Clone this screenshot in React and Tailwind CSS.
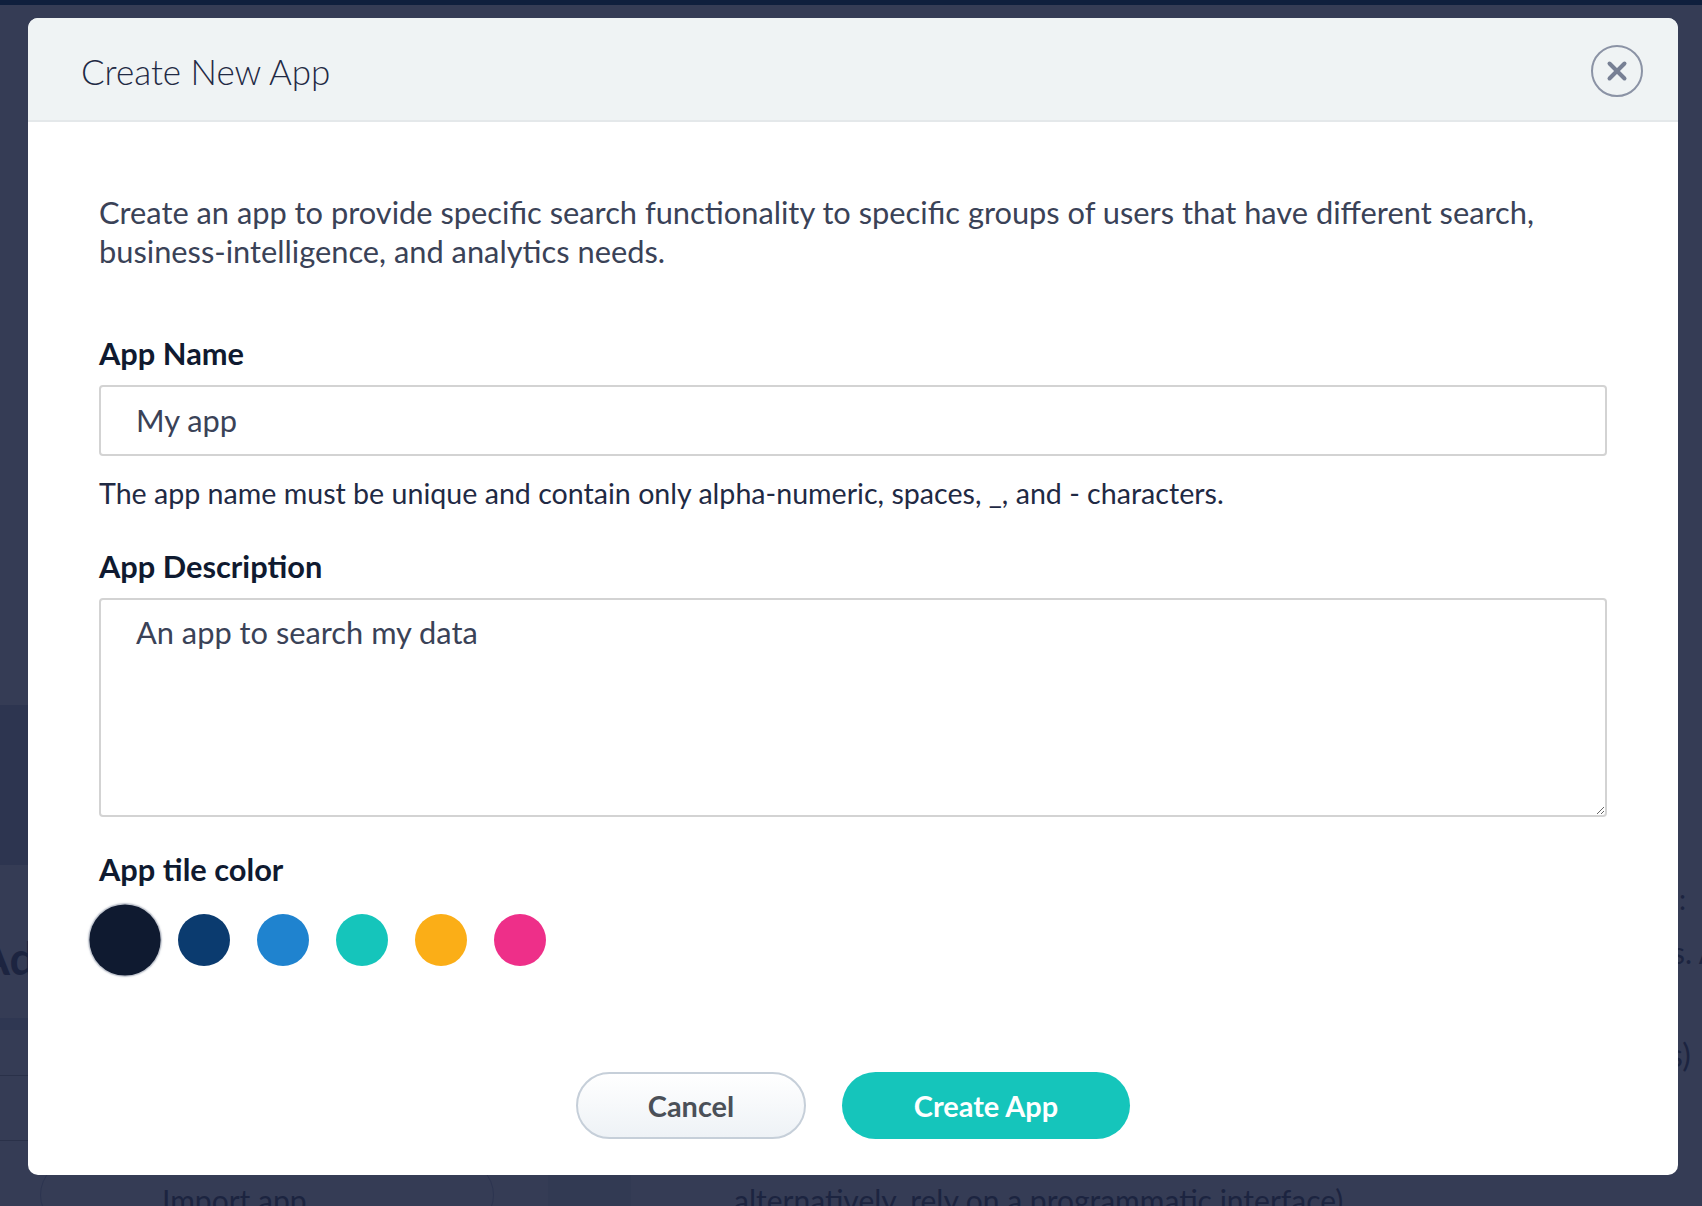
import { X } from 'lucide-react'

const colors = [
  { id: 'midnight', bg: 'bg-[#0f1a30]' },
  { id: 'navy', bg: 'bg-[#0b3b6f]' },
  { id: 'blue', bg: 'bg-[#1f83cf]' },
  { id: 'teal', bg: 'bg-[#15c5bb]' },
  { id: 'amber', bg: 'bg-[#fbae17]' },
  { id: 'pink', bg: 'bg-[#ee2f89]' },
]

function BackgroundPage() {
  // dimmed page behind the modal overlay
  return (
    <div className="absolute inset-0 text-[#1c2440]">
      <div className="absolute left-0 top-[705px] h-[160px] w-[28px] bg-[#2d3550]" />
      <span className="absolute left-[-22px] top-[935px] whitespace-nowrap text-[46px] font-bold leading-none">Ad</span>
      <div className="absolute left-0 top-[1018px] h-[12px] w-[28px] bg-[#2f3752]" />
      <div className="absolute left-0 top-[1075px] h-px w-[28px] bg-[#2a3149]" />
      <div className="absolute left-0 top-[1140px] h-px w-[28px] bg-[#2a3149]" />
      <div className="absolute left-[40px] top-[1160px] h-[70px] w-[454px] rounded-full border border-[#2c3450]" />
      <div className="absolute left-[548px] top-[1175px] h-[40px] w-[83px] bg-[#323a53]" />
      <span className="absolute left-[162px] top-[1185px] whitespace-nowrap text-[30px] leading-none">Import app</span>
      <span className="absolute left-[734px] top-[1185px] whitespace-nowrap text-[30px] leading-none">
        alternatively, rely on a programmatic interface)
      </span>
      <span className="absolute left-[1679px] top-[878px] whitespace-nowrap text-[28px]">:</span>
      <span className="absolute left-[1672px] top-[930px] whitespace-nowrap text-[30px]">s. A</span>
      <span className="absolute left-[1669px] top-[1031px] whitespace-nowrap text-[32px]">s)</span>
    </div>
  )
}

export default function App() {
  return (
    <div className="relative h-[1206px] w-full overflow-hidden bg-[#353c55] font-['Lato',sans-serif]">
      <div className="relative h-[5px] bg-[#0f1f3d]" />
      <BackgroundPage />

      {/* Modal */}
      <div className="absolute left-[28px] top-[18px] flex h-[1157px] w-[1650px] flex-col overflow-hidden rounded-[10px] bg-white">
        {/* Header */}
        <div className="flex h-[104px] shrink-0 items-center justify-between border-b-2 border-[#e4e8ea] bg-[#eff3f4] pl-[53px] pr-[35px] pt-[4px]">
          <h2 className="text-[35px] font-light text-[#1f2a44]">Create New App</h2>
          <button className="flex h-[52px] w-[52px] items-center justify-center rounded-full border-2 border-[#8b93a5] text-[#778094]">
            <X className="h-[30px] w-[30px]" strokeWidth={3.2} />
          </button>
        </div>

        {/* Body */}
        <div className="flex flex-1 flex-col px-[71px] pt-[71px]">
          <p className="text-[30.8px] leading-[39px] text-[#3a4257]">
            Create an app to provide specific search functionality to specific groups of users that have different search,
            business-intelligence, and analytics needs.
          </p>

          <label className="mt-[62px] text-[30.8px] font-bold leading-[42px] text-[#0f1a30]">App Name</label>
          <input
            defaultValue="My app"
            className="mt-[10px] h-[71px] w-full rounded-[4px] border-2 border-[#d3d3d3] px-[35px] text-[30.8px] text-[#3a4257] outline-none"
          />
          <p className="mt-[18px] text-[28.6px] leading-[39px] text-[#1f2a44]">
            The app name must be unique and contain only alpha-numeric, spaces, _, and - characters.
          </p>

          <label className="mt-[33px] text-[30.8px] font-bold leading-[42px] text-[#0f1a30]">App Description</label>
          <textarea
            defaultValue="An app to search my data"
            className="mt-[10px] h-[219px] w-full rounded-[4px] border-2 border-[#d3d3d3] px-[35px] py-[12px] text-[30.8px] leading-[42px] text-[#3a4257] outline-none"
          />

          <label className="mt-[32px] text-[30.8px] font-bold leading-[42px] text-[#0f1a30]">App tile color</label>
          <div className="mt-[23px] flex gap-[27px]">
            {colors.map((c, i) => (
              <button
                key={c.id}
                className={`h-[52px] w-[52px] rounded-full ${c.bg} ${i === 0 ? 'scale-[1.37] shadow-[0_0_1px_1px_rgba(120,130,150,0.5)]' : ''}`}
              />
            ))}
          </div>

          {/* Footer buttons */}
          <div className="mt-auto mb-[36px] flex justify-center gap-[36px]">
            <button className="h-[67px] w-[230px] rounded-full border-2 border-[#c6cfd9] bg-gradient-to-b from-white to-[#eef2f6] text-[28.9px] font-bold text-[#4b5058]">
              Cancel
            </button>
            <button className="h-[67px] w-[288px] rounded-full bg-[#15c5bb] text-[28.9px] font-bold text-white">
              Create App
            </button>
          </div>
        </div>
      </div>
    </div>
  )
}
